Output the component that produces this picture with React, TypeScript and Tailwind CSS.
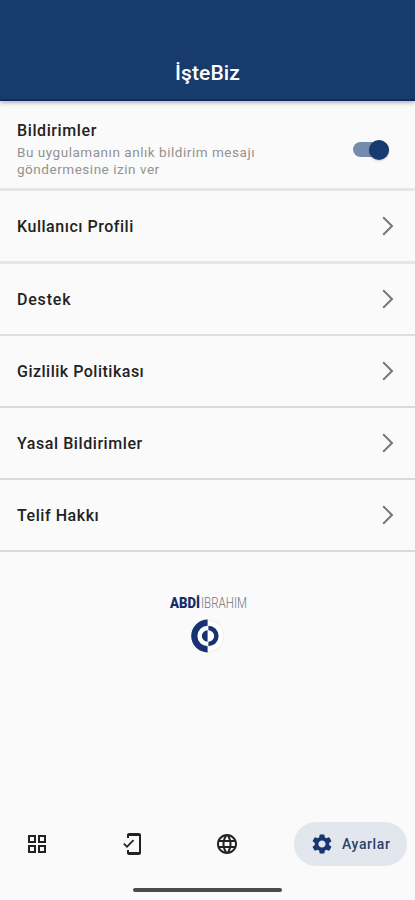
import React from 'react';
import { MdGridView, MdLanguage, MdMobileFriendly, MdSettings } from 'react-icons/md';

const rows: { label: string; height: string; border: string; tracking: string }[] = [
  { label: 'Kullanıcı Profili', height: 'h-[73px]', border: 'border-b-[3px] border-[#e6e6e6]', tracking: 'tracking-[0.53px]' },
  { label: 'Destek', height: 'h-[72px]', border: 'border-b-2 border-[#dedede]', tracking: 'tracking-[0.8px]' },
  { label: 'Gizlilik Politikası', height: 'h-[72px]', border: 'border-b-2 border-[#dadada]', tracking: 'tracking-[0.5px]' },
  { label: 'Yasal Bildirimler', height: 'h-[72px]', border: 'border-b-2 border-[#dadada]', tracking: 'tracking-[0.57px]' },
  { label: 'Telif Hakkı', height: 'h-[72px]', border: 'border-b-2 border-[#dadada]', tracking: 'tracking-[0.55px]' },
];

function FitText({ text, width, size, weight, fill }: { text: string; width: number; size: number; weight: number; fill: string }) {
  return (
    <svg width={width} height={20} className="block overflow-visible" fontFamily="Roboto, sans-serif">
      <text x="0" y="15" fontSize={size} fontWeight={weight} fill={fill} textLength={width} lengthAdjust="spacingAndGlyphs">
        {text}
      </text>
    </svg>
  );
}

function Chevron() {
  return (
    <svg width="12" height="20" viewBox="0 0 12 20" fill="none" stroke="#777" strokeWidth="2">
      <path d="M1.2 1.2 10 10l-8.8 8.8" />
    </svg>
  );
}

function Logo() {
  return (
    <div className="mt-[41px] flex flex-col items-center">
      <div className="flex h-[20px] items-center pl-[1px]">
        <FitText text="ABDİ" width={30} size={14} weight={900} fill="#172c69" />
        <span className="w-[1px]" />
        <FitText text="IBRAHIM" width={46} size={14} weight={300} fill="#6f7380" />
      </div>
      <svg width="34" height="34" viewBox="0 0 34 34" className="mt-[6px]">
        <circle cx="17" cy="17" r="16" fill="#fff" stroke="#e9e9ee" strokeWidth=".8" />
        <path d="M16.6.6a16.4 16.4 0 0 0 0 32.8v-6.2a10.2 10.2 0 0 1 0-20.4Z" fill="#173272" />
        <path d="M17.4 6.8a10.2 10.2 0 0 1 0 20.4v-4.4a5.8 5.8 0 0 0 0-11.6Z" fill="#173272" />
        <path d="M16.6 11.2a5.8 5.8 0 0 0 0 11.6Z" fill="#173272" />
      </svg>
    </div>
  );
}

export default function App() {
  return (
    <div className="flex h-[900px] w-full flex-col overflow-hidden bg-[#fafafa] font-['Roboto',sans-serif] text-[#222]">
      <header className="relative flex h-[101px] shrink-0 justify-center border-b-2 border-[#102866] bg-[#173b6d] pt-[59px] shadow-[0_2px_4px_rgba(0,0,0,0.28)]">
        <h1 className="text-[21px] font-medium leading-[28px] tracking-[0.1px] text-white">İşteBiz</h1>
      </header>

      <section className="flex h-[90px] shrink-0 border-b-[3px] border-[#e6e6e6] pl-[17px] pr-[26px] pt-[20px]">
        <div className="flex-1">
          <h2 className="text-[16px] font-medium leading-[20px] tracking-[0.6px]">Bildirimler</h2>
          <p className="mt-[3px] w-[260px] whitespace-nowrap text-[13.5px] leading-[17px] tracking-[0.53px] text-[#929292]">
            Bu uygulamanın anlık bildirim mesajı
            <br />
            göndermesine izin ver
          </p>
        </div>
        <div className="mt-[21px] flex h-[15px] w-[36px] items-center justify-end rounded-full bg-[#758bac]">
          <span className="h-[20px] w-[20px] shrink-0 rounded-full bg-[#173b70] shadow-[0_1px_2px_rgba(0,0,0,0.2)]" />
        </div>
      </section>

      <main>
        {rows.map((row) => (
          <div key={row.label} className={`flex items-center justify-between pl-[17px] pr-[21px] ${row.height} ${row.border}`}>
            <span className={`whitespace-nowrap pt-[2px] text-[16px] font-medium leading-[20px] ${row.tracking}`}>{row.label}</span>
            <Chevron />
          </div>
        ))}
      </main>

      <Logo />

      <nav className="mt-auto flex h-[44px] shrink-0 items-center pl-[25px] pr-[8px] text-[#222]">
        <MdGridView size={24} />
        <MdMobileFriendly size={24} className="ml-[71px]" />
        <MdLanguage size={24} className="ml-[71px]" />
        <div className="ml-auto flex h-[44px] w-[113px] items-center rounded-full bg-[#e2e7ee] pl-[16px] text-[#173672]">
          <MdSettings size={24} />
          <span className="ml-[8px] text-[14px] font-medium tracking-[0.6px] text-[#2c4169]">Ayarlar</span>
        </div>
      </nav>
      <div className="mb-[8px] ml-[133px] mt-[22px] h-[4px] w-[149px] shrink-0 rounded-full bg-[#4a4a4a]" />
    </div>
  );
}
